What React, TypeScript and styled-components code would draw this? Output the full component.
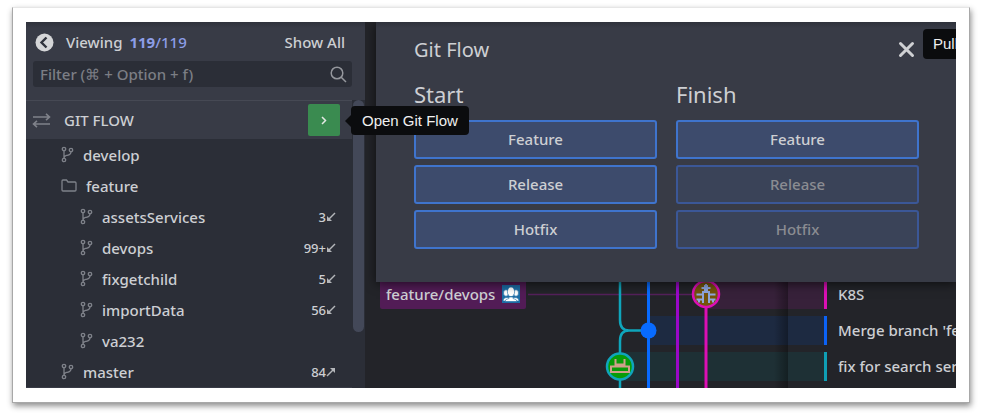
import React from "react";
import styled, { createGlobalStyle, css } from "styled-components";

const Global = createGlobalStyle`
  * { box-sizing: border-box; }
  body { margin: 0; background: #fff; font-family: "Noto Sans", "Open Sans", sans-serif; font-weight: 500; color: #cdcfd3; }
  button, input { font: inherit; color: inherit; }
  h1, h2 { margin: 0; font-weight: 400; }
  ul { margin: 0; padding: 0; list-style: none; }
`;

const Frame = styled.div`
  margin: 7px 11px 13px 12px;
  padding: 14px 13px;
  background: #fff;
  border: 1px solid #a8a8a8;
  border-top-color: #e6e6e6;
  box-shadow: 1px 3px 6px rgba(0, 0, 0, 0.45);
`;

const Window = styled.main`
  display: flex;
  overflow: hidden;
  background: #232429;
`;

const Sidebar = styled.aside`
  position: relative;
  flex: none;
  width: 339px;
  background: #2b2e37;
`;

const SidebarHead = styled.div`
  height: 79px;
  padding: 8px 13px 0 7px;
  background: linear-gradient(#2f323b, #383b46 6px);
  border-bottom: 1px solid #464954;
`;

const HeadLine = styled.div`
  display: flex;
  align-items: center;
  height: 24px;
  padding: 0 7px 0 2px;
  font-size: 15px;
`;

const BackButton = styled.button`
  display: flex;
  padding: 0;
  margin-right: 12px;
  border: 0;
  background: none;
`;

const Count = styled.span`
  margin-left: 7px;
  color: #8d9ee8;
  b { font-weight: 700; }
`;

const ShowAll = styled.button`
  margin-left: auto;
  padding: 0;
  border: 0;
  background: none;
`;

const Search = styled.label`
  display: flex;
  align-items: center;
  height: 26px;
  margin-top: 7px;
  padding: 0 5px 0 7px;
  border-radius: 3px;
  background: #2b2e37;
`;

const SearchInput = styled.input`
  flex: 1;
  min-width: 0;
  padding: 0;
  border: 0;
  outline: 0;
  background: none;
  font-size: 15px;
  &::placeholder { color: #7c7e85; opacity: 1; }
`;

const SectionRow = styled.div`
  display: flex;
  align-items: center;
  height: 38px;
  margin-right: 13px;
  padding: 0 12px 0 6px;
  background: #383b46;
  font-size: 15px;
`;

const SectionTitle = styled.span`
  flex: 1;
  margin-left: 13px;
`;

const OpenButton = styled.button`
  display: grid;
  place-items: center;
  width: 32px;
  height: 32px;
  padding: 0;
  border: 0;
  border-radius: 2px;
  background: #3a8b50;
`;

const BranchList = styled.ul`
  border-bottom: 1px solid #383b46;
`;

const BranchRow = styled.li<{ $depth: number }>`
  display: flex;
  align-items: center;
  gap: 9px;
  height: 31px;
  padding: 0 29px 0 ${(p) => 35 + p.$depth * 19}px;
  font-size: 15px;
`;

const Behind = styled.span`
  display: flex;
  align-items: center;
  margin-left: auto;
  font-size: 13px;
`;

const ScrollTrack = styled.div`
  position: absolute;
  top: 78px;
  right: 0;
  bottom: 0;
  width: 13px;
  background: #2b2e37;
`;

const ScrollThumb = styled.div`
  width: 11px;
  height: 232px;
  margin-left: 1px;
  border-radius: 6px;
  background: #434858;
`;

const tip = css`
  position: absolute;
  z-index: 3;
  border-radius: 4px;
  background: #0b0c0e;
  color: #f0f0f0;
  font-family: "Liberation Sans", Arial, sans-serif;
  font-size: 15px;
  white-space: nowrap;
`;

const OpenTip = styled.div`
  ${tip}
  left: 325px;
  top: 84px;
  padding: 0 11px;
  line-height: 29px;
  &::before {
    content: "";
    position: absolute;
    left: -6px;
    top: 9px;
    border: solid transparent;
    border-width: 6px 6px 6px 0;
    border-right-color: #0b0c0e;
  }
`;

const PullTip = styled.div`
  ${tip}
  right: -12px;
  top: 7px;
  padding: 0 10px;
  line-height: 30px;
`;

const Content = styled.section`
  position: relative;
  flex: 1;
  min-width: 0;
  padding-left: 11px;
  overflow: hidden;
`;

const Dialog = styled.section`
  position: relative;
  z-index: 1;
  height: 260px;
  padding: 12px 37px 0 38px;
  background: linear-gradient(#2f323b, #383b46 6px);
  box-shadow: 0 2px 10px rgba(0, 0, 0, 0.6);
`;

const DialogHead = styled.header`
  display: flex;
  align-items: center;
  justify-content: space-between;
  height: 30px;
  padding-right: 4px;
`;

const DialogTitle = styled.h1`
  font-size: 20px;
`;

const CloseButton = styled.button`
  display: flex;
  padding: 0;
  border: 0;
  background: none;
`;

const Columns = styled.div`
  display: grid;
  grid-template-columns: 1fr 1fr;
  gap: 19px;
  margin-top: 14px;
`;

const Column = styled.div`
  display: flex;
  flex-direction: column;
  gap: 6px;
`;

const ColumnTitle = styled.h2`
  height: 36px;
  font-size: 22px;
  line-height: 33px;
`;

const FlowButton = styled.button`
  height: 39px;
  padding: 0 0 2px;
  border: 2px solid #3f74cd;
  border-radius: 3px;
  background: #3d4b6c;
  font-size: 15px;
  &:disabled { border-color: #3b5797; background: #3a4358; color: #8a8c92; }
`;

const Graph = styled.div`
  position: relative;
  margin-top: -2px;
  &::after {
    content: "";
    position: absolute;
    left: 398px;
    top: 0;
    bottom: 0;
    width: 14px;
    background: linear-gradient(90deg, transparent, rgba(0, 0, 0, 0.35));
  }
`;

const CommitRow = styled.div`
  display: grid;
  grid-template-columns: 451px 1fr;
  height: 36px;
  padding-bottom: 7px;
`;

const Lane = styled.div<{ $start: number; $fill: string; $edge: string }>`
  margin-left: ${(p) => p.$start}px;
  background: ${(p) => p.$fill};
  border-right: 3px solid ${(p) => p.$edge};
`;

const Message = styled.span`
  padding-left: 11px;
  overflow: hidden;
  font-size: 15px;
  line-height: 28px;
  white-space: nowrap;
`;

const RefTag = styled.div`
  position: absolute;
  left: 4px;
  top: 0;
  display: flex;
  align-items: center;
  gap: 7px;
  height: 29px;
  padding: 0 6px 2px;
  border-radius: 2px;
  background: #521c56;
  font-size: 15px;
`;

const GraphArt = styled.svg`
  position: absolute;
  left: 0;
  top: 0;
`;

const BranchIcon = () => (
  <svg width="13" height="17" viewBox="0 0 13 17" fill="none" stroke="#7f828a" strokeWidth="1.3" aria-hidden="true">
    <circle cx="3" cy="3" r="1.7" /><circle cx="3" cy="14" r="1.7" /><circle cx="10" cy="4" r="1.7" />
    <path d="M3 4.7V12.3M10 5.7C10 9 7.5 9 5.5 9.4 4 9.700 3.200 10.400 3 12" />
  </svg>
);

const FolderIcon = () => (
  <svg width="16" height="13" viewBox="0 0 16 13" fill="none" stroke="#7f828a" strokeWidth="1.3" aria-hidden="true">
    <path d="M1 11V2Q1 1 2 1H5.500L7 3H14Q15 3 15 4V11Q15 12 14 12H2Q1 12 1 11Z" />
  </svg>
);

const Arrow = ({ up }: { up?: boolean }) => (
  <svg width="10" height="10" viewBox="0 0 10 10" aria-hidden="true">
    {up ? (
      <><path d="M1 9L7 3" stroke="#b4b6ba" strokeWidth="1.4" /><path d="M9 1V6L4 1Z" fill="#b4b6ba" /></>
    ) : (
      <><path d="M9 1L3 7" stroke="#b4b6ba" strokeWidth="1.4" /><path d="M1 9V4L6 9Z" fill="#b4b6ba" /></>
    )}
  </svg>
);

type Branch = { name: string; depth: number; folder?: boolean; count?: string; up?: boolean };
const branches: Branch[] = [
  { name: "develop", depth: 0 },
  { name: "feature", depth: 0, folder: true },
  { name: "assetsServices", depth: 1, count: "3" },
  { name: "devops", depth: 1, count: "99+" },
  { name: "fixgetchild", depth: 1, count: "5" },
  { name: "importData", depth: 1, count: "56" },
  { name: "va232", depth: 1 },
  { name: "master", depth: 0, count: "84", up: true },
];

const commits = [
  { text: "K8S", start: 330, fill: "#37213a", edge: "#dc0fb5" },
  { text: "Merge branch 'feature", start: 272, fill: "#1d2a41", edge: "#0b62f5" },
  { text: "fix for search service", start: 244, fill: "#1e3035", edge: "#0f9fb5" },
];

const flows = ["Feature", "Release", "Hotfix"];

export default function App() {
  return (
    <>
      <Global />
      <Frame>
        <Window>
          <Sidebar>
            <SidebarHead>
              <HeadLine>
                <BackButton aria-label="Collapse sidebar">
                  <svg width="19" height="19" viewBox="0 0 19 19">
                    <circle cx="9.5" cy="9.5" r="9" fill="#d5d6d8" />
                    <path d="M11.5 4.5L6.5 9.5L11.5 14.5" fill="none" stroke="#30333d" strokeWidth="2.4" />
                  </svg>
                </BackButton>
                Viewing<Count><b>119</b>/119</Count>
                <ShowAll>Show All</ShowAll>
              </HeadLine>
              <Search>
                <SearchInput aria-label="Filter branches" placeholder="Filter (⌘ + Option + f)" />
                <svg width="17" height="17" viewBox="0 0 17 17" fill="none" stroke="#95979d" strokeWidth="1.5" aria-hidden="true">
                  <circle cx="7" cy="7" r="5.8" /><path d="M11.2 11.2L16 16" />
                </svg>
              </Search>
            </SidebarHead>
            <SectionRow>
              <svg width="19" height="15" viewBox="0 0 19 15" fill="none" stroke="#7f828a" strokeWidth="1.6" aria-hidden="true">
                <path d="M1 4H17.5M14 .8L17.5 4L14 7.2M18 11H1.5M5 7.8L1.5 11L5 14.2" />
              </svg>
              <SectionTitle>GIT FLOW</SectionTitle>
              <OpenButton aria-label="Open Git Flow">
                <svg width="6" height="9" viewBox="0 0 6 9" fill="none" stroke="#e4e8e4" strokeWidth="1.5"><path d="M1 1L4.5 4.5L1 8" /></svg>
              </OpenButton>
            </SectionRow>
            <BranchList>
              {branches.map((b) => (
                <BranchRow key={b.name} $depth={b.depth}>
                  {b.folder ? <FolderIcon /> : <BranchIcon />}
                  {b.name}
                  {b.count && <Behind>{b.count}<Arrow up={b.up} /></Behind>}
                </BranchRow>
              ))}
            </BranchList>
            <ScrollTrack><ScrollThumb /></ScrollTrack>
            <OpenTip role="tooltip">Open Git Flow</OpenTip>
          </Sidebar>
          <Content>
            <PullTip role="tooltip">Pull</PullTip>
            <Dialog>
              <DialogHead>
                <DialogTitle>Git Flow</DialogTitle>
                <CloseButton aria-label="Close">
                  <svg width="17" height="17" viewBox="0 0 17 17" stroke="#cfd0d3" strokeWidth="3" strokeLinecap="round"><path d="M2.5 2.5L14.5 14.5M14.5 2.5L2.5 14.5" /></svg>
                </CloseButton>
              </DialogHead>
              <Columns>
                <Column>
                  <ColumnTitle>Start</ColumnTitle>
                  {flows.map((f) => <FlowButton key={f}>{f}</FlowButton>)}
                </Column>
                <Column>
                  <ColumnTitle>Finish</ColumnTitle>
                  {flows.map((f) => <FlowButton key={f} disabled={f !== "Feature"}>{f}</FlowButton>)}
                </Column>
              </Columns>
            </Dialog>
            <Graph>
              {commits.map((c) => (
                <CommitRow key={c.text}>
                  <Lane $start={c.start} $fill={c.fill} $edge={c.edge} />
                  <Message>{c.text}</Message>
                </CommitRow>
              ))}
              <GraphArt width="451" height="108" viewBox="0 0 451 108" fill="none" aria-hidden="true">
                <path d="M152 14.500H330" stroke="#53205a" strokeWidth="1.500" />
                <path d="M244 0V40Q244 50.500 253 50.500H272M244 108V61Q244 50.500 253 50.500" stroke="#0fa5bb" strokeWidth="2.500" />
                <path d="M272.500 0V108" stroke="#086bff" strokeWidth="3" />
                <path d="M301.500 0V108" stroke="#9a08c8" strokeWidth="3" />
                <path d="M330 0V108" stroke="#dc0fb5" strokeWidth="3" />
                <circle cx="272.500" cy="50.500" r="8" fill="#086bff" />
                <circle cx="330" cy="14" r="13" fill="#73540b" stroke="#dc0fb5" strokeWidth="2.500" />
                <path d="M330 4V9M325.500 8H334.500M327 12V23M333 12V23M326 12H334M320.500 14.500H327M333 14.500H339.500M320.500 19.500H327M333 19.500H339.500M323 19V22.500M337 19V22.500" stroke="#8fa6dd" strokeWidth="2" />
                <path d="M328 5H332V12H328Z" fill="#8fa6dd" />
                <circle cx="244" cy="86.500" r="13" fill="#089b08" stroke="#0fa5bb" strokeWidth="2.500" />
                <path d="M239.500 79V86.500H235V92H253V86.500H248.500V79M239.500 84.500H248.500M239.500 86.500H248.500" stroke="#cfa08a" strokeWidth="2" />
              </GraphArt>
              <RefTag>
                feature/devops
                <svg width="18" height="18" viewBox="0 0 18 18" aria-hidden="true">
                  <path d="M0 0H18V18H0Z" fill="#1c6ca5" />
                  <g fill="#fff" stroke="#1c6ca5" strokeWidth=".6">
                    <ellipse cx="4" cy="8" rx="2.500" ry="3.200" /><ellipse cx="14" cy="8" rx="2.500" ry="3.200" />
                    <path d="M1 16Q1 13 4 12.500H14Q17 13 17 16Z" />
                    <ellipse cx="9" cy="6.800" rx="3.600" ry="4.800" />
                    <path d="M3 16.500Q3 14 7 13.500V12H11V13.500Q15 14 15 16.500Z" />
                  </g>
                </svg>
              </RefTag>
            </Graph>
          </Content>
        </Window>
      </Frame>
    </>
  );
}
